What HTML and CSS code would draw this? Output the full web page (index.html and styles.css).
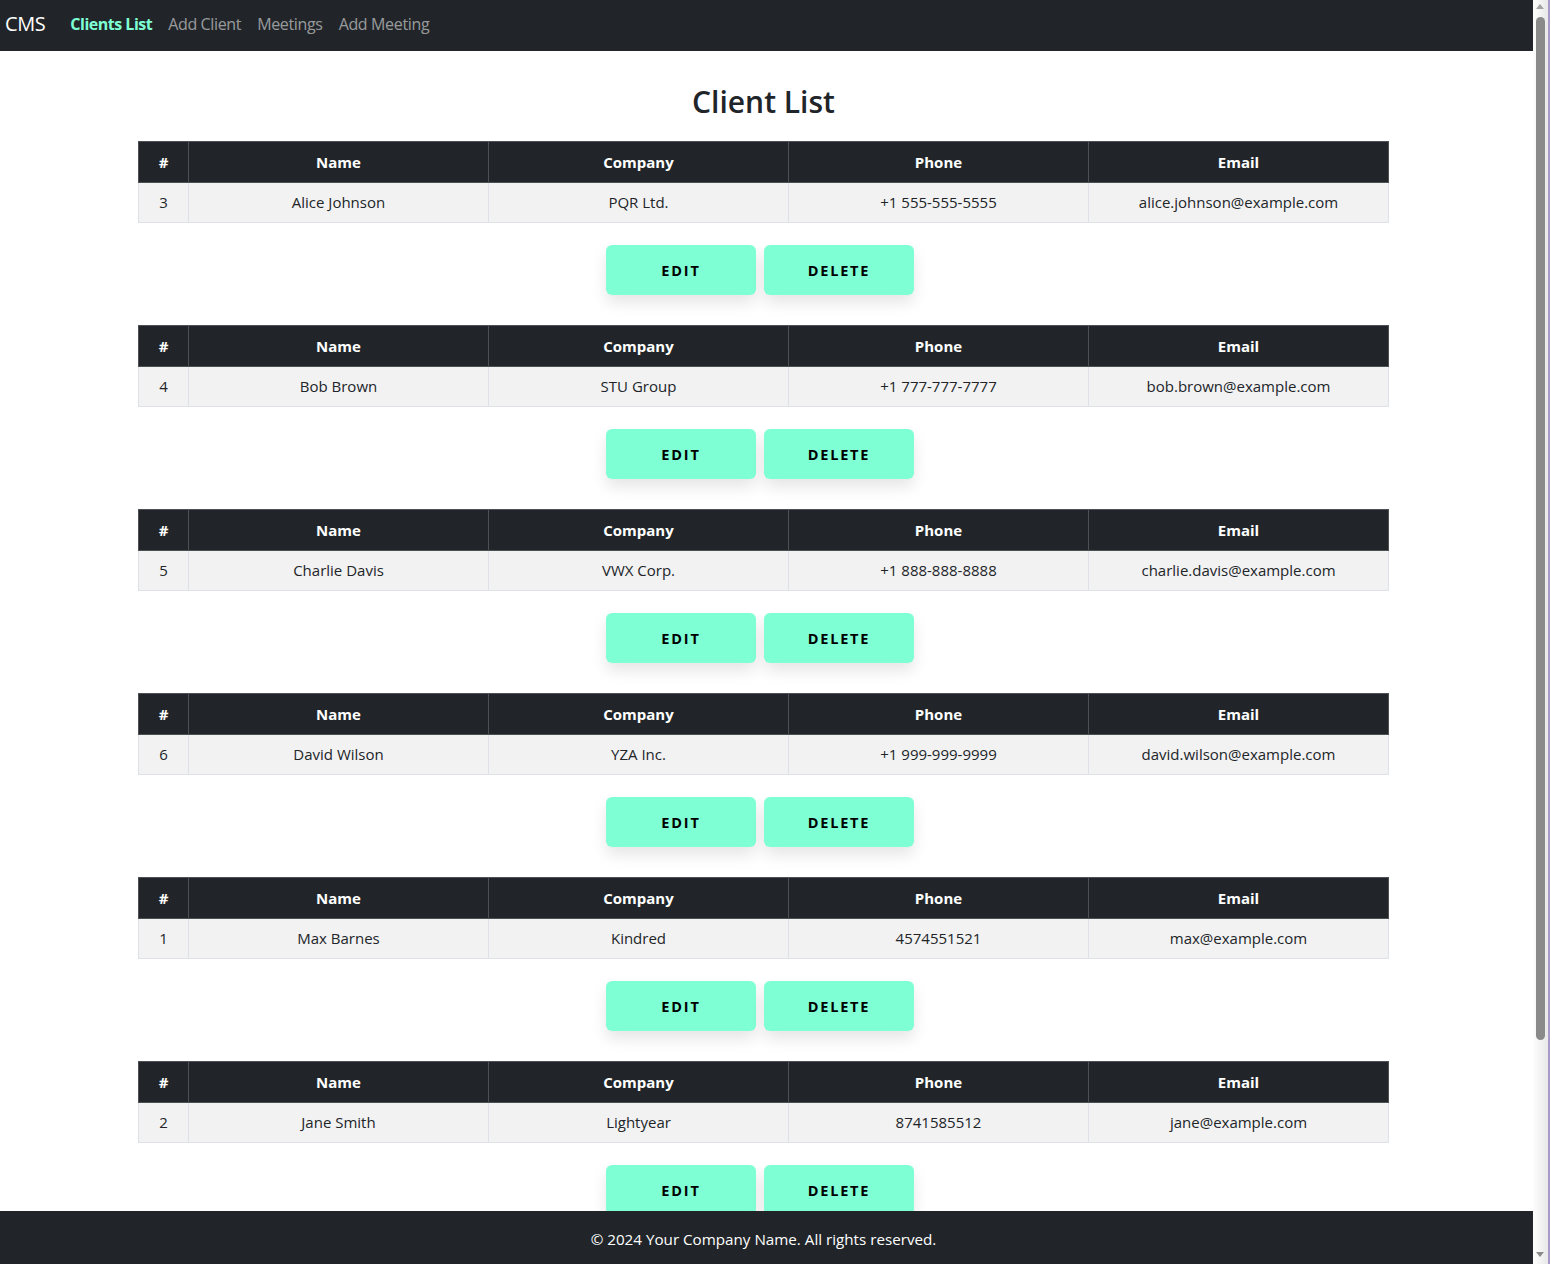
FILE: index.html
```html
<!DOCTYPE html>
<html lang="en">
<head>
<meta charset="utf-8">
<title>CMS - Client List</title>
<link rel="stylesheet" href="styles.css">
</head>
<body>
<nav class="navbar">
  <a class="brand" href="#">CMS</a>
  <ul class="nav">
    <li><a class="nav-link active" href="#">Clients List</a></li>
    <li><a class="nav-link" href="#">Add Client</a></li>
    <li><a class="nav-link" href="#">Meetings</a></li>
    <li><a class="nav-link" href="#">Add Meeting</a></li>
  </ul>
</nav>

<main class="content">
  <h1 class="title">Client List</h1>

  <section class="client">
    <table class="client-table">
      <thead><tr><th class="c-id">#</th><th>Name</th><th>Company</th><th>Phone</th><th>Email</th></tr></thead>
      <tbody><tr><td>3</td><td>Alice Johnson</td><td>PQR Ltd.</td><td>+1 555-555-5555</td><td>alice.johnson@example.com</td></tr></tbody>
    </table>
    <div class="actions"><button class="btn">Edit</button><button class="btn">Delete</button></div>
  </section>

  <section class="client">
    <table class="client-table">
      <thead><tr><th class="c-id">#</th><th>Name</th><th>Company</th><th>Phone</th><th>Email</th></tr></thead>
      <tbody><tr><td>4</td><td>Bob Brown</td><td>STU Group</td><td>+1 777-777-7777</td><td>bob.brown@example.com</td></tr></tbody>
    </table>
    <div class="actions"><button class="btn">Edit</button><button class="btn">Delete</button></div>
  </section>

  <section class="client">
    <table class="client-table">
      <thead><tr><th class="c-id">#</th><th>Name</th><th>Company</th><th>Phone</th><th>Email</th></tr></thead>
      <tbody><tr><td>5</td><td>Charlie Davis</td><td>VWX Corp.</td><td>+1 888-888-8888</td><td>charlie.davis@example.com</td></tr></tbody>
    </table>
    <div class="actions"><button class="btn">Edit</button><button class="btn">Delete</button></div>
  </section>

  <section class="client">
    <table class="client-table">
      <thead><tr><th class="c-id">#</th><th>Name</th><th>Company</th><th>Phone</th><th>Email</th></tr></thead>
      <tbody><tr><td>6</td><td>David Wilson</td><td>YZA Inc.</td><td>+1 999-999-9999</td><td>david.wilson@example.com</td></tr></tbody>
    </table>
    <div class="actions"><button class="btn">Edit</button><button class="btn">Delete</button></div>
  </section>

  <section class="client">
    <table class="client-table">
      <thead><tr><th class="c-id">#</th><th>Name</th><th>Company</th><th>Phone</th><th>Email</th></tr></thead>
      <tbody><tr><td>1</td><td>Max Barnes</td><td>Kindred</td><td>4574551521</td><td>max@example.com</td></tr></tbody>
    </table>
    <div class="actions"><button class="btn">Edit</button><button class="btn">Delete</button></div>
  </section>

  <section class="client">
    <table class="client-table">
      <thead><tr><th class="c-id">#</th><th>Name</th><th>Company</th><th>Phone</th><th>Email</th></tr></thead>
      <tbody><tr><td>2</td><td>Jane Smith</td><td>Lightyear</td><td>8741585512</td><td>jane@example.com</td></tr></tbody>
    </table>
    <div class="actions"><button class="btn">Edit</button><button class="btn">Delete</button></div>
  </section>
</main>

<footer class="footer">© 2024 Your Company Name. All rights reserved.</footer>

<div class="scrollbar" aria-hidden="true">
  <span class="sb-arrow sb-up"></span>
  <span class="sb-thumb"></span>
  <span class="sb-fill"></span>
  <span class="sb-arrow sb-down"></span>
</div>
</body>
</html>
```

FILE: styles.css
```css
* { box-sizing: border-box; }

html, body { overflow-x: hidden; }
html::-webkit-scrollbar { width: 0; height: 0; }

body {
  margin: 0;
  width: 1533px;
  font-family: "Open Sans", "Noto Sans", "Liberation Sans", sans-serif;
  font-size: 16px;
  line-height: 1.5;
  color: #212529;
  background: #fff;
}

.navbar {
  height: 51px;
  background: #212529;
  display: flex;
  align-items: center;
  padding: 0 0 4px 5px;
}
.brand {
  color: #fff;
  font-size: 20px;
  text-decoration: none;
  margin-right: 17px;
  letter-spacing: -0.4px;
}
.nav {
  list-style: none;
  margin: 0;
  padding: 0;
  display: flex;
}
.nav-link {
  display: block;
  padding: 8px 8px;
  color: rgba(255,255,255,0.55);
  text-decoration: none;
  font-size: 16px;
  letter-spacing: -0.35px;
}
.nav-link.active {
  color: #7fffd4;
  font-weight: 700;
  letter-spacing: -0.5px;
}

.content {
  padding: 31px 0 305px 138px;
}
.title {
  text-align: center;
  width: 1251px;
  font-size: 30px;
  font-weight: 600;
  line-height: 40px;
  margin: 0 0 19px;
}

.client { margin-bottom: 30px; }

.client-table {
  width: 1251px;
  border-collapse: collapse;
  text-align: center;
  font-size: 15px;
}
.client-table th {
  background: #212529;
  color: #fff;
  font-weight: 700;
  height: 41px;
  border: 1px solid #4d5154;
  padding: 0 8px;
  width: 300px;
}
.client-table th.c-id { width: 50px; }
.client-table td {
  background: #f2f2f2;
  height: 40px;
  border: 1px solid #dee2e6;
  padding: 0 8px;
}

.actions {
  display: flex;
  justify-content: center;
  gap: 8px;
  margin-top: 22px;
  width: 1251px;
  padding-right: 7px;
}
.btn {
  width: 150px;
  height: 50px;
  border: 0;
  border-radius: 6px;
  background: #7fffd4;
  color: #000;
  font-family: inherit;
  font-size: 14.5px;
  font-weight: 700;
  text-transform: uppercase;
  letter-spacing: 1.8px;
  box-shadow: 0 8px 15px rgba(0,0,0,0.1);
  cursor: pointer;
}

.footer {
  position: fixed;
  left: 0;
  bottom: 0;
  width: 1533px;
  height: 53px;
  background: #212529;
  color: #fff;
  display: flex;
  align-items: center;
  justify-content: center;
  padding: 4px 6px 0 0;
  font-size: 15.2px;
}

/* imitation of the browser's vertical scrollbar */
.scrollbar {
  position: fixed;
  top: 0;
  right: 0;
  width: 17px;
  height: 100%;
  background: linear-gradient(to right, #fdfdfd, #e9e9e9);
  border-right: 2px solid #a99bc9;
  display: flex;
  flex-direction: column;
  align-items: center;
  padding: 4px 1px 0 0;
}
.sb-arrow {
  width: 0;
  height: 0;
  border-left: 4px solid transparent;
  border-right: 4px solid transparent;
}
.sb-up {
  border-bottom: 5px solid #a3a3a3;
  margin-bottom: 8px;
}
.sb-thumb {
  width: 9px;
  height: 1023px;
  border-radius: 5px;
  background: #8a8a8a;
}
.sb-fill { flex: 1; }
.sb-down {
  border-top: 5px solid #8a8a8a;
  margin-bottom: 7px;
}
```
